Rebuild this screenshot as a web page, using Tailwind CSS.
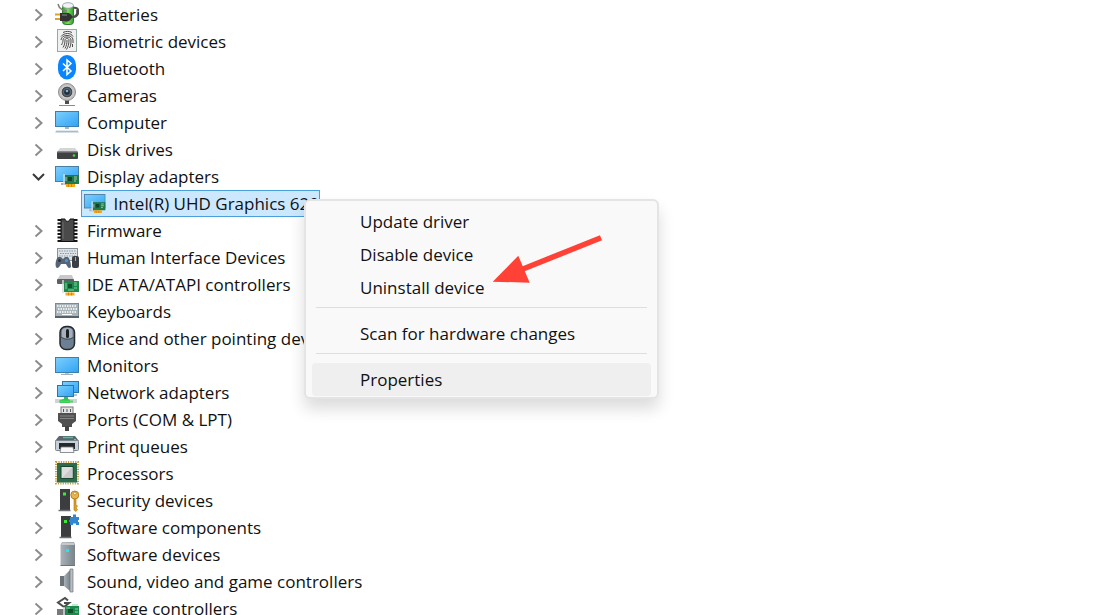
<!DOCTYPE html>
<html lang="en">
<head>
    <meta charset="UTF-8">
    <meta name="viewport" content="width=device-width, initial-scale=1.0">
    <title>Device Manager</title>
    <script src="https://cdn.jsdelivr.net/npm/@tailwindcss/browser@4"></script>
</head>
<body class="bg-white">
    <!-- shared shapes -->
    <svg class="absolute size-0" aria-hidden="true">
        <defs>
            <linearGradient id="screen" x1="0" y1="0" x2="1" y2="1">
                <stop offset="0" stop-color="#7fd0fc"/>
                <stop offset="1" stop-color="#2fa3f5"/>
            </linearGradient>
            <linearGradient id="steel" x1="0" y1="0" x2="1" y2="0">
                <stop offset="0" stop-color="#a9b2b8"/>
                <stop offset="1" stop-color="#78838a"/>
            </linearGradient>
            <linearGradient id="green" x1="0" y1="0" x2="1" y2="0">
                <stop offset="0" stop-color="#2f9a2f"/>
                <stop offset=".5" stop-color="#7be05c"/>
                <stop offset="1" stop-color="#2f9a2f"/>
            </linearGradient>
        </defs>
        <symbol id="chevron" viewBox="0 0 16 27">
            <path d="M4.500 8.500 10.500 14 4.500 19.500" fill="none" stroke="#8c8c8c" stroke-width="2"/>
        </symbol>
        <symbol id="chevron-open" viewBox="0 0 16 27">
            <path d="M2 11 7.500 16.500 13 11" fill="none" stroke="#3a3a3a" stroke-width="2"/>
        </symbol>
        <symbol id="display" viewBox="0 0 24 27">
            <rect x=".5" y="3.500" width="23" height="15" fill="url(#screen)" stroke="#4a7fa3"/>
            <path d="M6 21h5" stroke="#9fb0bb" stroke-width="2"/>
            <path d="M9 11v11" stroke="#d5dade" stroke-width="1.500"/>
            <rect x="10" y="12" width="14" height="9" fill="#1f7a4d"/>
            <rect x="13" y="14" width="4" height="4" fill="#12432c"/>
            <path d="M19 14h3M19 16h3M19 18h2M11 14v4" stroke="#a5c8a8"/>
            <path d="M11 22.500h9" stroke="#f0a81c" stroke-width="3"/>
            <path d="M13.500 21v3M16.500 21v3" stroke="#c27a0c" stroke-width=".7"/>
        </symbol>
    </svg>

    <main class="relative h-screen overflow-hidden pt-px font-['Open_Sans','Noto_Sans',sans-serif] text-[17px] leading-[27px] text-[#111]">
        <ul>
            <li class="flex gap-2 pl-[31px]">
                <button aria-label="Expand Batteries"><svg class="h-[27px] w-4"><use href="#chevron"/></svg></button>
                <svg class="h-[27px] w-6" viewBox="0 0 24 27">
                    <path d="M18 7c7-2 7 8 1 9" fill="none" stroke="#4b4b4b" stroke-width="2"/>
                    <rect x="7.500" y="3.500" width="11" height="20" rx="3" fill="url(#green)" stroke="#347a32"/>
                    <ellipse cx="13" cy="4.500" rx="5.500" ry="2.800" fill="#f2f3f6" stroke="#8e93a5" stroke-width=".8"/>
                    <path d="M3 3c1 5 6 7 9 7" fill="none" stroke="#7d8075" stroke-width="1.500"/>
                    <path d="M0 13.500h6M0 18h6" stroke="#e0a128" stroke-width="2"/>
                    <path d="M5 12h4c5-1 7 1 8 3l1 1-2 2c-2 3-5 3-7 2H5z" fill="#333"/>
                    <path d="M7 14h5" stroke="#8a8a8a"/>
                    <path d="M17 16c4 0 6-3 5-7" fill="none" stroke="#4b4b4b" stroke-width="2"/>
                </svg>
                <span>Batteries</span>
            </li>
            <li class="flex gap-2 pl-[31px]">
                <button aria-label="Expand Biometric devices"><svg class="h-[27px] w-4"><use href="#chevron"/></svg></button>
                <svg class="h-[27px] w-6" viewBox="0 0 24 27">
                    <rect x="2.500" y="1.500" width="19" height="22" fill="#eef1f0" stroke="#94aaa4"/>
                    <g fill="none" stroke="#4d4d4d">
                        <path d="M8 4.500c3-1.500 6-1.500 9 0M6 8.500c3-4 10-4 12 0M6 12c0-6 12-6 12 0v3M6.500 17c1-2 1.500-3 1.500-5 0-4 8-4 8 0 0 3 0 5-1.500 8M8 19.500c1.500-2 2-5 2-7.500 0-2 4-2 4 0 0 4-1 7-2.500 9.500M10 20.500c1.500-3 2-5 2-8.500M17.500 16v3"/>
                    </g>
                </svg>
                <span>Biometric devices</span>
            </li>
            <li class="flex gap-2 pl-[31px]">
                <button aria-label="Expand Bluetooth"><svg class="h-[27px] w-4"><use href="#chevron"/></svg></button>
                <svg class="h-[27px] w-6" viewBox="0 0 24 27">
                    <rect x="3" y="0" width="18" height="24.500" rx="9" ry="10" fill="#0a84ff"/>
                    <path d="M8 8.500l8 7.500-4 3.500V5L16 8.500 8 16" fill="none" stroke="#fff" stroke-width="1.500"/>
                </svg>
                <span>Bluetooth</span>
            </li>
            <li class="flex gap-2 pl-[31px]">
                <button aria-label="Expand Cameras"><svg class="h-[27px] w-4"><use href="#chevron"/></svg></button>
                <svg class="h-[27px] w-6" viewBox="0 0 24 27">
                    <path d="M10 18h4v4h-4z" fill="#4c4c4c"/>
                    <path d="M4 23.500h16" stroke="#8b8b8b"/>
                    <circle cx="12" cy="10" r="8.500" fill="#c3c3c3" stroke="#8d8d8d"/>
                    <circle cx="12" cy="10" r="5.800" fill="#474b50" stroke="#eee" stroke-width=".6"/>
                    <circle cx="12" cy="10" r="3.500" fill="#22303e" stroke="#71808e" stroke-width=".8"/>
                    <circle cx="12" cy="9" r="1.300" fill="#7cb0df"/>
                </svg>
                <span>Cameras</span>
            </li>
            <li class="flex gap-2 pl-[31px]">
                <button aria-label="Expand Computer"><svg class="h-[27px] w-4"><use href="#chevron"/></svg></button>
                <svg class="h-[27px] w-6" viewBox="0 0 24 27">
                    <rect x=".5" y="2.500" width="23" height="15" fill="url(#screen)" stroke="#3a7fb0"/>
                    <path d="M10 18h4v2h-4z" fill="#a7b7c1"/>
                    <path d="M2 21h20l2 2.500H0z" fill="#a9bccb"/>
                    <path d="M2 21.500h20" stroke="#dfe8ee"/>
                </svg>
                <span>Computer</span>
            </li>
            <li class="flex gap-2 pl-[31px]">
                <button aria-label="Expand Disk drives"><svg class="h-[27px] w-4"><use href="#chevron"/></svg></button>
                <svg class="h-[27px] w-6" viewBox="0 0 24 27">
                    <path d="M5 12h15l3 4H2z" fill="#d5d5d5"/>
                    <rect x="2" y="15.500" width="21" height="7.500" rx="1" fill="#3f4143"/>
                    <path d="M2.500 16h20" stroke="#85888b"/>
                    <circle cx="19" cy="19.500" r="1.300" fill="#3fdf3c"/>
                </svg>
                <span>Disk drives</span>
            </li>
            <li>
                <div class="flex gap-2 pl-[31px]">
                    <button aria-label="Collapse Display adapters"><svg class="h-[27px] w-4"><use href="#chevron-open"/></svg></button>
                    <svg class="h-[27px] w-6"><use href="#display"/></svg>
                    <span>Display adapters</span>
                </div>
                <ul class="pl-[81px]">
                    <li class="flex h-[27px] w-[239px] items-center gap-2 border border-[#4a9fdc] bg-[#cce8ff] pl-0.5 whitespace-nowrap">
                        <svg class="h-[27px] w-6"><use href="#display"/></svg>
                        <span>Intel(R) UHD Graphics 620</span>
                    </li>
                </ul>
            </li>
            <li class="flex gap-2 pl-[31px]">
                <button aria-label="Expand Firmware"><svg class="h-[27px] w-4"><use href="#chevron"/></svg></button>
                <svg class="h-[27px] w-6" viewBox="0 0 24 27">
                    <path d="M4.500 2v23M20.500 2v23" stroke="#151515" stroke-width="4" stroke-dasharray="2 1.500"/>
                    <path d="M6 2h4c0 3 5 3 5 0h4v22.500H6z" fill="#4a4a4a" stroke="#111"/>
                    <path d="M8 5v17" stroke="#6d6d6d"/>
                </svg>
                <span>Firmware</span>
            </li>
            <li class="flex gap-2 pl-[31px]">
                <button aria-label="Expand Human Interface Devices"><svg class="h-[27px] w-4"><use href="#chevron"/></svg></button>
                <svg class="h-[27px] w-6" viewBox="0 0 24 27">
                    <rect x="2.500" y="4.500" width="20" height="12" fill="#dde3e7" stroke="#87929a"/>
                    <path d="M4 7h17M5 9.500h16M4 12h17" stroke="#8c979f" stroke-dasharray="1.500 1"/>
                    <path d="M3 13h3l2 2 2-2h3c2 2 3 7 3 10-2 2-3 1-5-3H6c-2 4-4 5-5 3-1-3 0-8 2-10z" fill="#566676"/>
                    <circle cx="4.500" cy="16.500" r="1.500" fill="#2c3640"/>
                    <circle cx="11.500" cy="16.500" r="1.500" fill="#37a0ec"/>
                    <rect x="17" y="12" width="7" height="12" rx="2" fill="#3b4046"/>
                    <path d="M20.500 13v4" stroke="#a1abb3"/>
                </svg>
                <span>Human Interface Devices</span>
            </li>
            <li class="flex gap-2 pl-[31px]">
                <button aria-label="Expand IDE ATA/ATAPI controllers"><svg class="h-[27px] w-4"><use href="#chevron"/></svg></button>
                <svg class="h-[27px] w-6" viewBox="0 0 24 27">
                    <path d="M5 4h12l2 5H2z" fill="#c9c9c9"/>
                    <rect x="2" y="8" width="17" height="5" rx="1" fill="#5d5f61"/>
                    <path d="M8 9v13" stroke="#d5dade" stroke-width="1.500"/>
                    <rect x="9" y="10" width="15" height="11" fill="#1d8a4d"/>
                    <rect x="13" y="13" width="4" height="4" fill="#11512e"/>
                    <path d="M19 12h3M19 14h3M19 17h3M11 12v6M13 19h6" stroke="#8fd0a0"/>
                    <path d="M10.500 23h9" stroke="#f5ac1c" stroke-width="3"/>
                    <path d="M13.500 21.500v3M16.500 21.500v3" stroke="#c27a0c" stroke-width=".7"/>
                </svg>
                <span>IDE ATA/ATAPI controllers</span>
            </li>
            <li class="flex gap-2 pl-[31px]">
                <button aria-label="Expand Keyboards"><svg class="h-[27px] w-4"><use href="#chevron"/></svg></button>
                <svg class="h-[27px] w-6" viewBox="0 0 24 27">
                    <rect x=".5" y="5.500" width="23" height="14" fill="#a9b4bb" stroke="#7e8a92"/>
                    <path d="M2 8h20M3 11h19M2 14h20" stroke="#fff" stroke-width="1.500" stroke-dasharray="1.500 1"/>
                    <path d="M7 16.500h10" stroke="#fff"/>
                    <path d="M0 19h24" stroke="#55626b" stroke-width="2"/>
                </svg>
                <span>Keyboards</span>
            </li>
            <li class="flex gap-2 pl-[31px]">
                <button aria-label="Expand Mice and other pointing devices"><svg class="h-[27px] w-4"><use href="#chevron"/></svg></button>
                <svg class="h-[27px] w-6" viewBox="0 0 24 27">
                    <rect x="5" y="1.500" width="14.500" height="23" rx="6" fill="#6d7f93" stroke="#25292d" stroke-width="1.500"/>
                    <path d="M7 5c2-3 8-3 10.500 0v7c-3 2-7.500 2-10.500 0z" fill="#a3b0bd"/>
                    <path d="M6 12c4 3 9 3 13 0" fill="none" stroke="#454c53"/>
                    <rect x="11" y="4" width="3" height="9" rx="1.500" fill="#1d1f21"/>
                </svg>
                <span class="whitespace-nowrap">Mice and other pointing devices</span>
            </li>
            <li class="flex gap-2 pl-[31px]">
                <button aria-label="Expand Monitors"><svg class="h-[27px] w-4"><use href="#chevron"/></svg></button>
                <svg class="h-[27px] w-6" viewBox="0 0 24 27">
                    <rect x=".5" y="5.500" width="23" height="15" fill="url(#screen)" stroke="#3a7fb0"/>
                    <path d="M10 21h4v1.500h-4z" fill="#b9c5cd"/>
                    <path d="M6 22.500h12" stroke="#9fb0bb"/>
                </svg>
                <span>Monitors</span>
            </li>
            <li class="flex gap-2 pl-[31px]">
                <button aria-label="Expand Network adapters"><svg class="h-[27px] w-4"><use href="#chevron"/></svg></button>
                <svg class="h-[27px] w-6" viewBox="0 0 24 27">
                    <rect x="7.500" y="2.500" width="16" height="11" fill="url(#screen)" stroke="#2f74a5"/>
                    <path d="M19 16h3" stroke="#9fb0bb" stroke-width="1.500"/>
                    <rect x="2.500" y="6.500" width="16" height="11" fill="url(#screen)" stroke="#2f74a5"/>
                    <path d="M0 22h22" stroke="#cfd3d5" stroke-width="4"/>
                    <path d="M9 18h4v2l2 1v3H5v-3l4-1z" fill="#2fc44c"/>
                    <path d="M4 22.500h14" stroke="#48d95f" stroke-width="2"/>
                </svg>
                <span>Network adapters</span>
            </li>
            <li class="flex gap-2 pl-[31px]">
                <button aria-label="Expand Ports (COM &amp; LPT)"><svg class="h-[27px] w-4"><use href="#chevron"/></svg></button>
                <svg class="h-[27px] w-6" viewBox="0 0 24 27">
                    <rect x="6" y="1" width="12" height="7" fill="#e3e3e3" stroke="#777"/>
                    <path d="M8.500 3v3M12 3v3M15.500 3v3" stroke="#555"/>
                    <path d="M3 7h18v8l-4 3v3H7v-3l-4-3z" fill="#505050"/>
                    <path d="M5 10h14M5 12.500h14" stroke="#858585"/>
                    <path d="M12 20v5" stroke="#444" stroke-width="4"/>
                </svg>
                <span>Ports (COM &amp; LPT)</span>
            </li>
            <li class="flex gap-2 pl-[31px]">
                <button aria-label="Expand Print queues"><svg class="h-[27px] w-4"><use href="#chevron"/></svg></button>
                <svg class="h-[27px] w-6" viewBox="0 0 24 27">
                    <path d="M4 3h16l4 5H0z" fill="#5c666d"/>
                    <path d="M8 4.500h10" stroke="#35d39b" stroke-width="1.500"/>
                    <path d="M19 6.500h2" stroke="#5fe35f"/>
                    <rect x=".5" y="7.500" width="23" height="10" rx="1" fill="#c7cfd8" stroke="#7a858f"/>
                    <path d="M4 10h16v6H4z" fill="#25282a"/>
                    <path d="M6 14h12l1 5.500H5z" fill="#f8f8f8" stroke="#6d767d" stroke-width=".8"/>
                </svg>
                <span>Print queues</span>
            </li>
            <li class="flex gap-2 pl-[31px]">
                <button aria-label="Expand Processors"><svg class="h-[27px] w-4"><use href="#chevron"/></svg></button>
                <svg class="h-[27px] w-6" viewBox="0 0 24 27">
                    <rect x="1" y="2" width="22" height="21.500" fill="none" stroke="#c69a43" stroke-width="2" stroke-dasharray="1.200 1.200"/>
                    <rect x="2" y="3" width="20" height="19.500" fill="#2c6b4b"/>
                    <rect x="6" y="6.500" width="12" height="12" fill="#dedede" stroke="#18482f"/>
                    <path d="M17.500 7v11H7z" fill="#c9cac9"/>
                </svg>
                <span>Processors</span>
            </li>
            <li class="flex gap-2 pl-[31px]">
                <button aria-label="Expand Security devices"><svg class="h-[27px] w-4"><use href="#chevron"/></svg></button>
                <svg class="h-[27px] w-6" viewBox="0 0 24 27">
                    <path d="M5 2h10v21H5z" fill="#3b3d3f"/>
                    <path d="M3.500 23.500h12" stroke="#6e7173" stroke-width="1.500"/>
                    <rect x="8" y="5.500" width="3" height="3" fill="#38ee31"/>
                    <path d="M19 11v12l2 1.500 1.500-2-1.500-1.500 1.500-2-1.500-1.500V11z" fill="#dfa126" stroke="#a8700f" stroke-width=".6"/>
                    <circle cx="19.800" cy="8" r="4" fill="#eab64c" stroke="#a8700f" stroke-width=".8"/>
                    <circle cx="19.800" cy="6.500" r="1.300" fill="#fff" stroke="#a8700f" stroke-width=".6"/>
                </svg>
                <span>Security devices</span>
            </li>
            <li class="flex gap-2 pl-[31px]">
                <button aria-label="Expand Software components"><svg class="h-[27px] w-4"><use href="#chevron"/></svg></button>
                <svg class="h-[27px] w-6" viewBox="0 0 24 27">
                    <path d="M6 2h10v21H6z" fill="#3b3d3f"/>
                    <path d="M4.500 23.500h12" stroke="#6e7173" stroke-width="1.500"/>
                    <rect x="9" y="6" width="3" height="3" fill="#38ee31"/>
                    <path d="M15 3h3V.5h3V3h3v3h-1v2h1v3h-3V9.500h-3V11h-3V8h-1V6h1z" fill="#2f86d1"/>
                </svg>
                <span>Software components</span>
            </li>
            <li class="flex gap-2 pl-[31px]">
                <button aria-label="Expand Software devices"><svg class="h-[27px] w-4"><use href="#chevron"/></svg></button>
                <svg class="h-[27px] w-6" viewBox="0 0 24 27">
                    <path d="M7 1h12l1 3v20.500H5.500V4z" fill="url(#steel)"/>
                    <path d="M7 1.500h12l.5 2.500H6.500z" fill="#c3c9cd"/>
                    <rect x="11" y="8" width="3" height="3" fill="#27e4f2"/>
                    <path d="M5.500 24.500H20" stroke="#6a7379"/>
                </svg>
                <span>Software devices</span>
            </li>
            <li class="flex gap-2 pl-[31px]">
                <button aria-label="Expand Sound, video and game controllers"><svg class="h-[27px] w-4"><use href="#chevron"/></svg></button>
                <svg class="h-[27px] w-6" viewBox="0 0 24 27">
                    <path d="M5 8h4v10H5z" fill="#6b7278"/>
                    <path d="M9 8l6-6v21l-6-5z" fill="url(#steel)"/>
                    <path d="M15 1h3v23h-3z" fill="#b7bec4" stroke="#70777d" stroke-width=".7"/>
                </svg>
                <span>Sound, video and game controllers</span>
            </li>
            <li class="flex gap-2 pl-[31px]">
                <button aria-label="Expand Storage controllers"><svg class="h-[27px] w-4"><use href="#chevron"/></svg></button>
                <svg class="h-[27px] w-6" viewBox="0 0 24 27">
                    <path d="M13 5.500 10 3 3 7.500 9 12l5-4H9" fill="none" stroke="#4c4c4c" stroke-width="2"/>
                    <path d="M2 14h8v7H2z" fill="#77797b"/>
                    <path d="M9 12v13" stroke="#d5dade" stroke-width="1.500"/>
                    <rect x="10" y="11" width="14" height="11" fill="#1d8a4d"/>
                    <rect x="13" y="14" width="5" height="4" fill="#11512e"/>
                    <path d="M17 10h6M20 14h3M20 17h3M11 13h4" stroke="#8fd0a0"/>
                </svg>
                <span>Storage controllers</span>
            </li>
        </ul>

        <!-- context menu -->
        <div role="menu" class="absolute top-[199px] left-[304px] flex w-[355px] flex-col rounded-md border-2 border-[#e4e4e4] bg-[#f9f9f9] px-1.5 pt-1 pb-px shadow-[0_10px_16px_rgba(0,0,0,0.14)]">
            <button role="menuitem" class="h-[33px] rounded-sm pl-12 text-left">Update driver</button>
            <button role="menuitem" class="h-[33px] rounded-sm pl-12 text-left">Disable device</button>
            <button role="menuitem" class="h-[33px] rounded-sm pl-12 text-left">Uninstall device</button>
            <hr class="mx-1 mt-[3px] mb-[9px] border-[#dedede]">
            <button role="menuitem" class="h-[33px] rounded-sm pl-12 text-left">Scan for hardware changes</button>
            <hr class="mx-1 mt-[3px] mb-[9px] border-[#dedede]">
            <button role="menuitem" class="h-[33px] rounded-sm bg-[#efefef] pl-12 text-left">Properties</button>
        </div>

        <!-- arrow pointing at "Uninstall device" -->
        <svg class="absolute top-[234px] left-[492px] h-[50px] w-[112px]" viewBox="0 0 112 50" fill="#ff4136">
            <path d="M.7 47.700 26.300 21.700 37.700 48.700z"/>
            <path d="M31 35 109 3.700" stroke="#ff4136" stroke-width="5.500"/>
        </svg>
    </main>
</body>
</html>
